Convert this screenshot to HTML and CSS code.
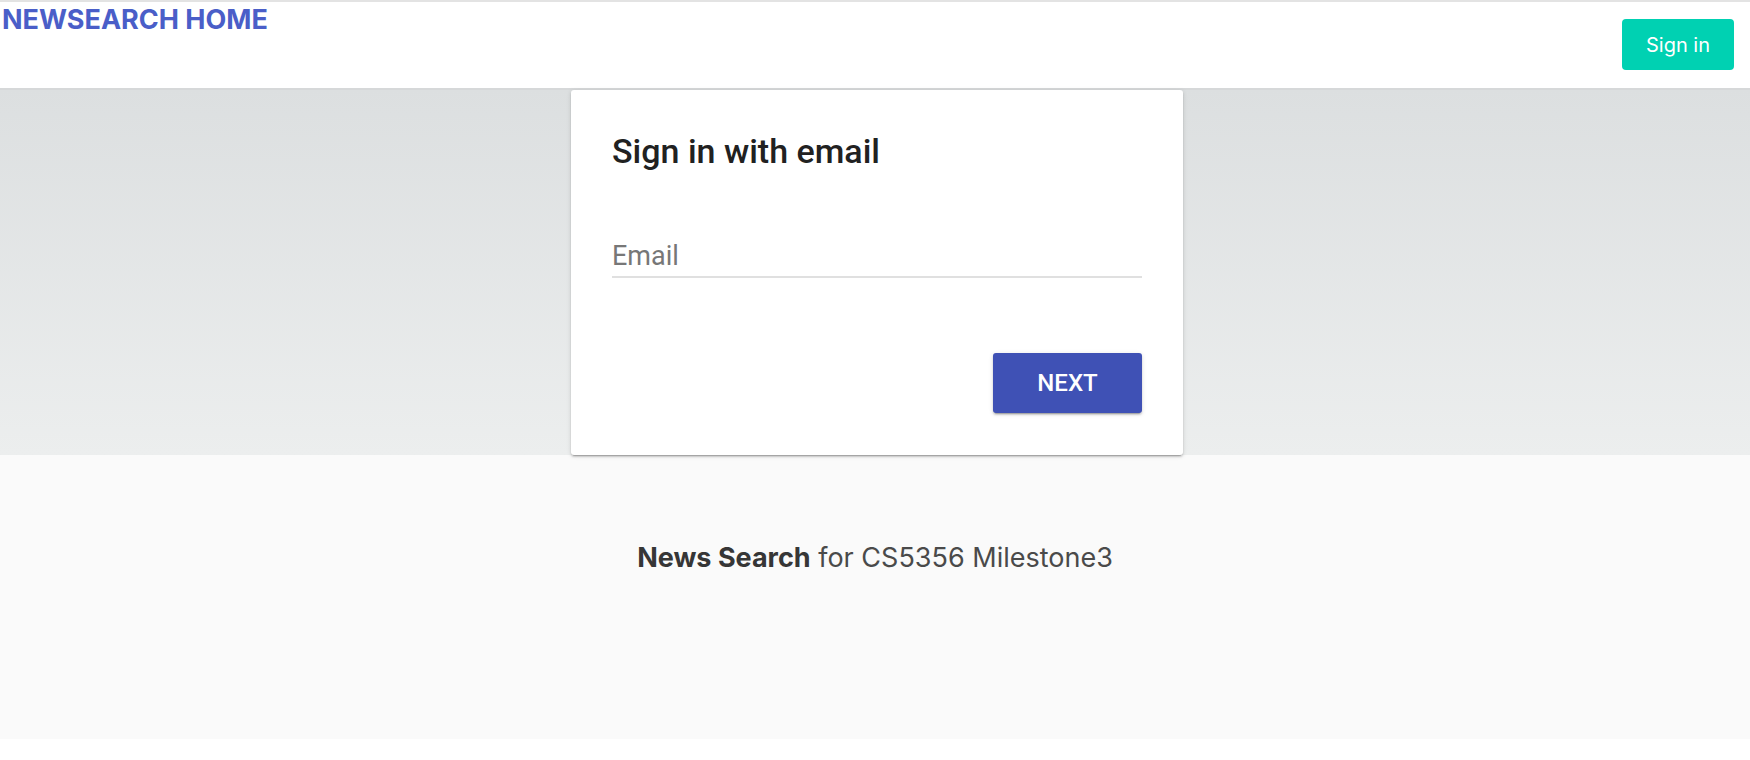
FILE: index.html
```html
<!DOCTYPE html>
<html lang="en">
<head>
<meta charset="utf-8">
<title>NewSearch</title>
<link rel="stylesheet" href="styles.css">
</head>
<body>
<header class="navbar">
  <a class="brand" href="#">NEWSEARCH HOME</a>
  <a class="btn-signin" href="#">Sign in</a>
</header>
<section class="hero">
  <div class="card">
    <h1 class="card-title">Sign in with email</h1>
    <div class="textfield">
      <label class="field-label">Email</label>
    </div>
    <div class="card-actions">
      <button class="btn-next">Next</button>
    </div>
  </div>
</section>
<footer class="footer">
  <p><strong>News Search</strong> for CS5356 Milestone3</p>
</footer>
</body>
</html>
```

FILE: styles.css
```css
html, body {
  margin: 0;
  padding: 0;
  background: #ffffff;
}

.navbar {
  display: flex;
  justify-content: space-between;
  align-items: flex-start;
  height: 86px;
  border-top: 2px solid #e3e3e3;
  border-bottom: 2px solid #d6d8d9;
  background: #ffffff;
}

.brand {
  font-family: Inter, "Liberation Sans", sans-serif;
  font-weight: 700;
  font-size: 27px;
  line-height: 33px;
  color: #4a5ec8;
  text-decoration: none;
  padding: 1px 0 0 2px;
}

.btn-signin {
  margin: 17px 16px 0 0;
  height: 51px;
  width: 112px;
  display: flex;
  align-items: center;
  justify-content: center;
  box-sizing: border-box;
  background: #00d1b2;
  color: #ffffff;
  border-radius: 4px;
  font-family: Inter, "Liberation Sans", sans-serif;
  font-size: 20px;
  text-decoration: none;
}

.hero {
  display: flex;
  justify-content: center;
  padding-left: 4px;
  background: linear-gradient(to bottom, #dcdfe0, #eceeee);
}

.card {
  width: 612px;
  box-sizing: border-box;
  padding: 41px 41px 42px;
  background: #ffffff;
  border-radius: 3px;
  box-shadow: 0 2px 2px 0 rgba(0,0,0,.14), 0 3px 1px -2px rgba(0,0,0,.2), 0 1px 5px 0 rgba(0,0,0,.12);
  font-family: Roboto, "Liberation Sans", sans-serif;
}

.card-title {
  margin: 0;
  font-size: 34px;
  font-weight: 500;
  line-height: 40px;
  color: #212121;
}

.textfield {
  margin-top: 69px;
  padding-bottom: 4px;
  border-bottom: 2px solid #e0e0e0;
}

.field-label {
  display: block;
  font-size: 27px;
  line-height: 32px;
  color: #777777;
}

.card-actions {
  display: flex;
  justify-content: flex-end;
  margin-top: 75px;
}

.btn-next {
  width: 149px;
  height: 60px;
  border: none;
  border-radius: 3px;
  background: #3f51b5;
  color: #ffffff;
  font-family: Roboto, "Liberation Sans", sans-serif;
  font-size: 24px;
  font-weight: 500;
  text-transform: uppercase;
  box-shadow: 0 2px 2px 0 rgba(0,0,0,.14), 0 3px 1px -2px rgba(0,0,0,.2), 0 1px 5px 0 rgba(0,0,0,.12);
}

.footer {
  background: #fafafa;
  padding: 82px 24px 161px;
  text-align: center;
  font-family: Inter, "Liberation Sans", sans-serif;
  font-size: 27px;
  line-height: 41px;
  color: #4a4a4a;
}

.footer p {
  margin: 0;
}

.footer strong {
  color: #363636;
  font-weight: 700;
}
```
